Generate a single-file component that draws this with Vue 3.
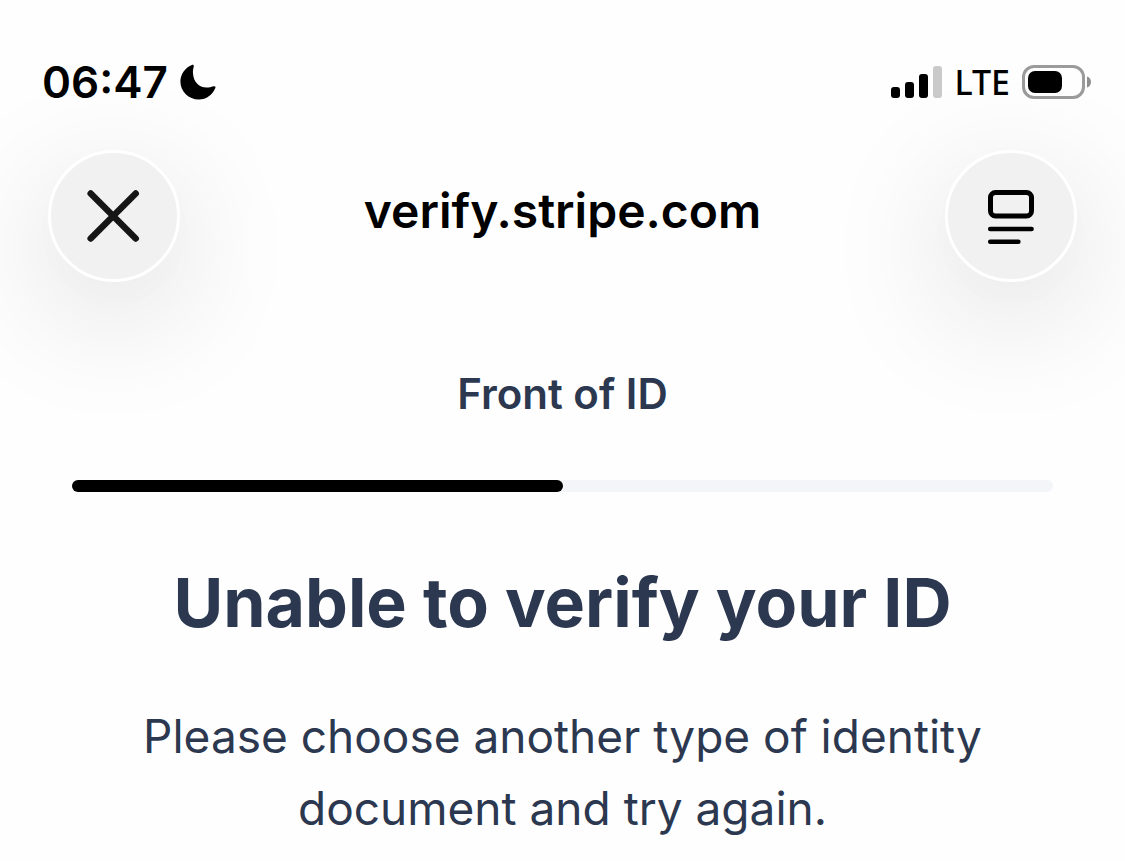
<script setup>
import { ref } from 'vue'

const time = '06:47'
const host = 'verify.stripe.com'
const step = 'Front of ID'
const progress = ref(50)
</script>

<template>
  <div class="screen">
    <div class="status">
      <div class="clock">
        <span>{{ time }}</span>
        <svg class="moon" viewBox="0 0 36 36" aria-hidden="true">
          <path d="M11.8 1C12.8 0.2 14 1 13.8 2.2C13.1 5 12.8 7 13 9.4C13.6 17.6 18.6 23.3 26.6 23.6C29 23.6 31.2 23.2 33.4 22.3C34.9 21.7 36 22.8 35.3 24.1C32.4 31 26.4 35.6 18.8 35.6C8.6 35.6 0.4 27.6 0.4 17.6C0.4 10.4 4.8 4 11.8 1Z" />
        </svg>
      </div>
      <div class="signals">
        <svg class="bars" viewBox="0 0 51 32" aria-hidden="true">
          <rect x="0" y="21" width="9" height="11" rx="3" />
          <rect x="14" y="16" width="9" height="16" rx="3" />
          <rect x="28" y="8" width="9" height="24" rx="3" />
          <rect class="faint" x="42" y="0" width="9" height="32" rx="3" />
        </svg>
        <span class="carrier">LTE</span>
        <svg class="battery" viewBox="0 0 70 34" aria-hidden="true">
          <rect class="shell" x="1.5" y="1.5" width="60" height="31" rx="10.5" />
          <rect x="6" y="6" width="34" height="22" rx="7" />
          <path class="cap" d="M65 11.5C67.5 12.3 69 14.4 69 17C69 19.6 67.5 21.7 65 22.5Z" />
        </svg>
      </div>
    </div>

    <header class="nav">
      <button class="round" type="button" aria-label="Close">
        <svg class="glyph" viewBox="0 0 56 56" aria-hidden="true">
          <path class="cross" d="M4.7 5.5L49.7 50.5M49.7 5.5L4.7 50.5" />
        </svg>
      </button>
      <span class="host">{{ host }}</span>
      <button class="round" type="button" aria-label="Page menu">
        <svg class="glyph" viewBox="0 0 56 56" aria-hidden="true">
          <rect class="line" x="7.5" y="4.5" width="41" height="23.5" rx="5" />
          <path class="rule" d="M7.2 41H48.6 M7.2 53.7H35.4" />
        </svg>
      </button>
    </header>

    <main class="content">
      <p id="step" class="step">{{ step }}</p>
      <div class="track" role="progressbar" aria-labelledby="step" :aria-valuenow="progress">
        <div class="fill" :style="{ width: progress + '%' }"></div>
      </div>
      <h1>Unable to verify your ID</h1>
      <p class="message">Please choose another type of identity document and try again.</p>
    </main>
    <div class="edge"></div>
  </div>
</template>

<style>
body {
  margin: 0;
  background: #fefefe;
}
</style>

<style scoped>
.screen {
  box-sizing: border-box;
  min-height: 100vh;
  display: flex;
  flex-direction: column;
  overflow: hidden;
  padding-top: 54px;
  color: #000;
  font-family: Inter, "Liberation Sans", sans-serif;
}

.status {
  display: flex;
  align-items: center;
  justify-content: space-between;
  height: 56px;
  padding: 0 33px 0 42px;
}

.clock {
  display: flex;
  align-items: center;
  gap: 12px;
  font-size: 44px;
  font-weight: 600;
}

.moon {
  width: 36px;
  height: 36px;
}

.signals {
  display: flex;
  align-items: center;
  gap: 12px;
}

.bars {
  width: 51px;
  height: 32px;
}

.faint {
  fill: #cacaca;
}

.carrier {
  font-family: "Noto Sans", Inter, sans-serif;
  font-size: 34px;
  line-height: 48px;
  font-weight: 500;
}

.battery {
  width: 70px;
  height: 34px;
}

.shell {
  fill: none;
  stroke: #9b9b9b;
  stroke-width: 3;
}

.cap {
  fill: #8e8e8e;
}

.nav {
  display: flex;
  align-items: center;
  justify-content: space-between;
  margin-top: 40px;
  padding: 0 48px;
}

.round {
  box-sizing: border-box;
  display: flex;
  align-items: center;
  justify-content: center;
  width: 132px;
  height: 132px;
  padding: 0;
  border: 3px solid #fff;
  border-radius: 50%;
  background: #f1f1f1;
  box-shadow: 0 32px 130px rgba(0, 0, 0, 0.14), 0 16px 50px rgba(0, 0, 0, 0.01);
}

.glyph {
  width: 56px;
  height: 56px;
  overflow: visible;
  fill: none;
  stroke: #000;
  stroke-linecap: round;
}

.cross {
  stroke: #161616;
  stroke-width: 6.5;
}

.line {
  stroke-width: 5;
}

.rule {
  stroke-width: 4.5;
}

.host {
  padding-bottom: 12px;
  font-size: 48px;
  font-weight: 600;
}

.content {
  position: relative;
  padding: 0 72px;
  color: #2c3850;
  text-align: center;
}

.step {
  margin: 86px 0 60px;
  font-size: 42px;
  line-height: 52px;
  font-weight: 600;
}

.track {
  height: 12px;
  border-radius: 6px;
  background: #f4f5f9;
}

.fill {
  height: 100%;
  border-radius: 6px;
  background: #000;
}

h1 {
  margin: 66px 0 0;
  font-size: 68px;
  line-height: 88px;
  font-weight: 700;
}

.message {
  max-width: 860px;
  margin: 54px auto 0;
  font-size: 46px;
  line-height: 72px;
}

.edge {
  height: 1px;
  margin: auto 96px 0;
  box-shadow: 0 4px 12px rgba(0, 0, 0, 0.06);
}
</style>
